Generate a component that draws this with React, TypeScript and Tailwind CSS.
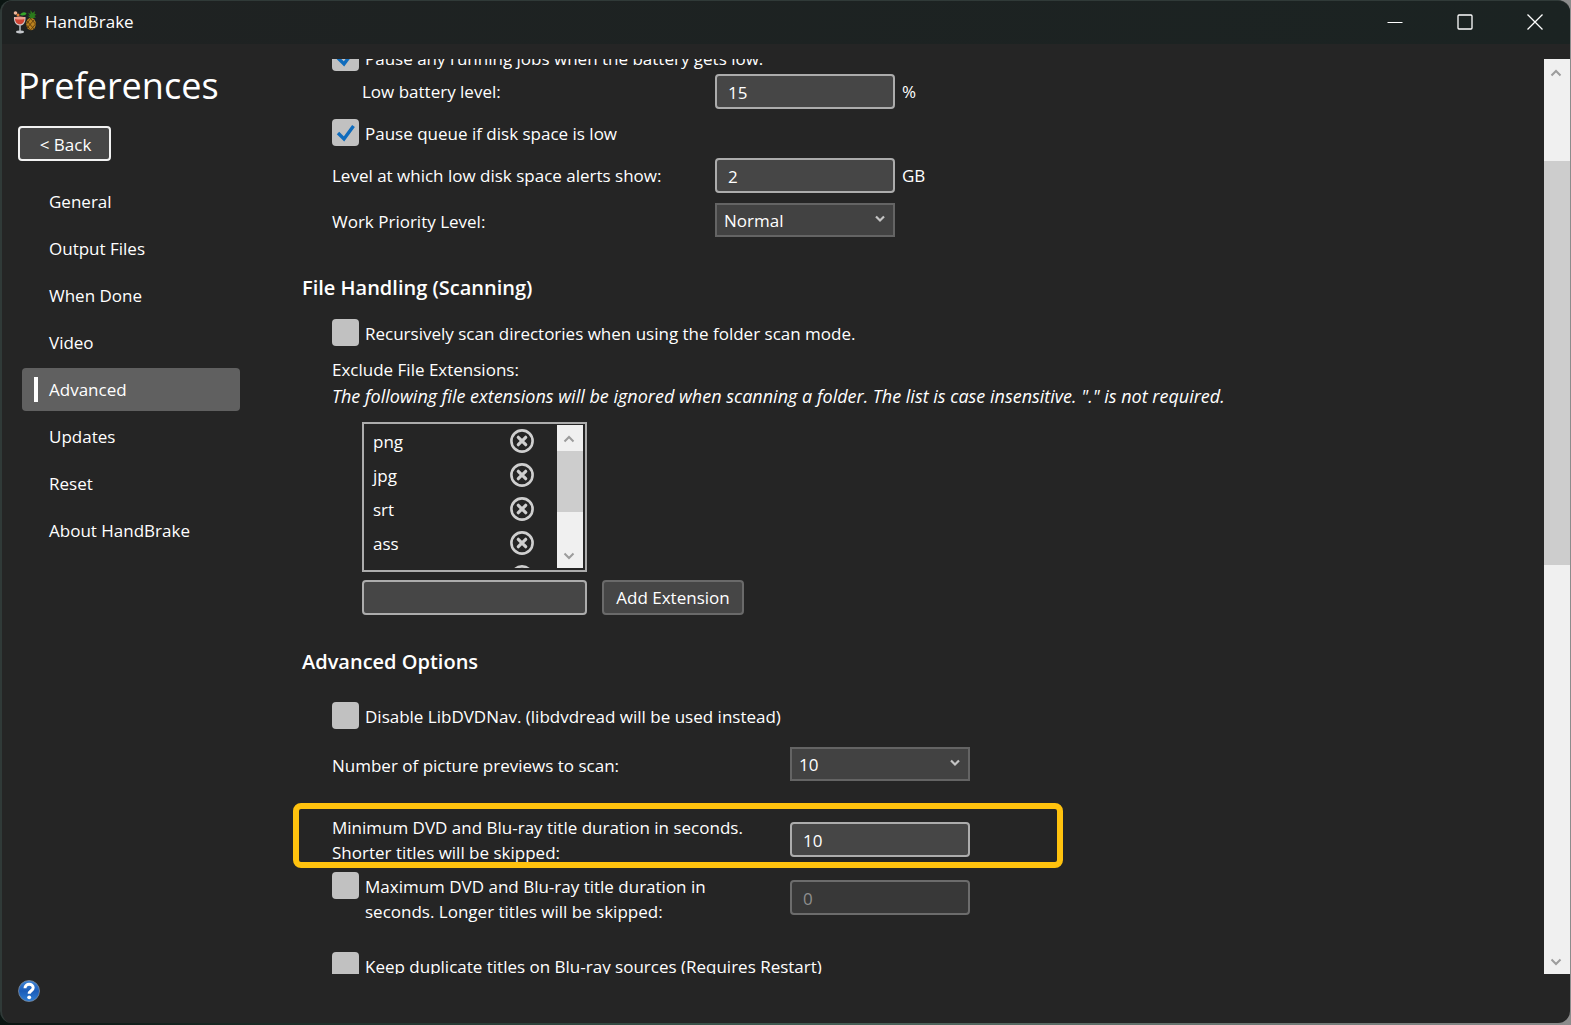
import { useId } from 'react';
import type { ReactNode } from 'react';
import clsx from 'clsx';

const NAV_ITEMS = ['General', 'Output Files', 'When Done', 'Video', 'Advanced', 'Updates', 'Reset', 'About HandBrake'];
const EXTENSIONS = ['png', 'jpg', 'srt', 'ass', 'txt'];

function AppIcon() {
  return (
    <svg width="24" height="24" viewBox="0 0 24 24" aria-hidden="true">
      <ellipse cx="18" cy="14" rx="4.800" ry="6.200" fill="#b9821f" />
      <path d="M14 11l7 8M13.500 15l4 5M17 8l5.500 6M21 10l-7 8M22.500 14l-5 6M18 8l-4.500 6" stroke="#5f3c0c" strokeWidth="0.900" />
      <path d="M18 8.500l-3.500-3 2.500.5-2-3.500 2.500 1.500L17.500 0l2 3L22 1l-.5 3 2 .5-2 1.500 1.500 1.500z" fill="#2b7a1c" />
      <path d="M7 5c1.500-3 5-3.500 6.500-1.500C13 5.500 9.500 6 7 5z" fill="#35a52a" />
      <circle cx="2.500" cy="3" r="1.800" fill="#f0b79c" />
      <circle cx="5" cy="5" r="1.500" fill="#e0803a" />
      <path d="M1 7h11.500c.5 5-2 8-4.500 8.500H6C3 15 .5 12 1 7z" fill="#cfc6c8" />
      <path d="M2 9h9.500c0 3-2 5-4 5.300H6C4 14 2 12 2 9z" fill="#cf4434" />
      <ellipse cx="6.800" cy="8" rx="5.200" ry="1.500" fill="#ee9d8c" />
      <path d="M6.200 15h1.600v6H6.200z" fill="#b0b3b8" />
      <ellipse cx="7" cy="22" rx="4" ry="1.400" fill="#c4c7cb" />
    </svg>
  );
}

function HelpIcon() {
  return (
    <svg width="22" height="24" viewBox="0 0 22 24" aria-hidden="true">
      <defs>
        <linearGradient id="help-fill" x1="0" y1="0" x2="0" y2="1">
          <stop offset="0" stopColor="#3f86d8" />
          <stop offset="0.500" stopColor="#1b5cb8" />
          <stop offset="1" stopColor="#2f7fd6" />
        </linearGradient>
      </defs>
      <circle cx="11" cy="12" r="10.500" fill="url(#help-fill)" stroke="#7f8c9c" strokeWidth="0.800" />
      <path d="M7 9.200c0-5.200 8.200-5.200 8.200-.4 0 3-4 3-4 6" fill="none" stroke="#fff" strokeWidth="3" />
      <circle cx="11.200" cy="18.300" r="1.900" fill="#fff" />
    </svg>
  );
}

function Chevron({ up = false }: { up?: boolean }) {
  return (
    <svg width="12" height="8" viewBox="0 0 12 8" aria-hidden="true">
      <path d={up ? 'M1.500 6.500L6 2l4.500 4.500' : 'M1.500 1.500L6 6l4.500-4.500'} fill="none" stroke="currentColor" strokeWidth="2" />
    </svg>
  );
}

function Scrollbar({ before, thumb, after }: { before: string; thumb: string; after: string }) {
  return (
    <div className="flex w-[26px] shrink-0 flex-col bg-[#f0f0f0] text-[#9c9c9c]">
      <button type="button" aria-label="Scroll up" className="flex h-[26px] items-center justify-center pt-0.5 pr-0.5">
        <Chevron up />
      </button>
      <div className="flex min-h-0 flex-1 flex-col">
        <div className={before} />
        <div className={clsx('bg-[#cdcdcd]', thumb)} />
        <div className={after} />
      </div>
      <button type="button" aria-label="Scroll down" className="flex h-[26px] items-center justify-center pt-0.5 pr-0.5">
        <Chevron />
      </button>
    </div>
  );
}

function CheckRow({ label, checked = false, className }: { label: ReactNode; checked?: boolean; className?: string }) {
  return (
    <label className={clsx('flex items-start gap-1.5', className)}>
      <span className="grid size-[27px] shrink-0">
        <input
          type="checkbox"
          defaultChecked={checked}
          className="peer col-start-1 row-start-1 size-full appearance-none rounded bg-[#c1c1c1]"
        />
        <svg
          viewBox="0 0 27 27"
          className="pointer-events-none invisible col-start-1 row-start-1 size-full peer-checked:visible"
          aria-hidden="true"
        >
          <path d="M6 14l6 6L21.500 7" fill="none" stroke="#0f6cbd" strokeWidth="3.400" />
        </svg>
      </span>
      <span className="pt-0.5 leading-[25px]">{label}</span>
    </label>
  );
}

function TextInput({
  id,
  value,
  disabled = false,
  className,
}: {
  id: string;
  value: string;
  disabled?: boolean;
  className?: string;
}) {
  return (
    <input
      id={id}
      type="text"
      defaultValue={value}
      disabled={disabled}
      className={clsx(
        'h-[35px] w-[180px] rounded border-2 border-[#acacac] bg-[#464646] px-[11px] pt-px disabled:border-[#6c6c6c] disabled:bg-[#383838] disabled:text-[#8e8e8e]',
        className
      )}
    />
  );
}

function SelectInput({ id, options }: { id: string; options: string[] }) {
  return (
    <span className="grid h-[34px] w-[180px]">
      <select
        id={id}
        className="col-start-1 row-start-1 appearance-none border-2 border-[#646464] bg-[#424242] pt-px pl-[7px]"
      >
        {options.map((o) => (
          <option key={o}>{o}</option>
        ))}
      </select>
      <svg
        width="10"
        height="8"
        viewBox="0 0 10 8"
        className="pointer-events-none col-start-1 row-start-1 mr-2.5 mb-0.5 self-center justify-self-end"
        aria-hidden="true"
      >
        <path d="M1 1.500l4 4 4-4" fill="none" stroke="#c4c4c4" strokeWidth="2.200" />
      </svg>
    </span>
  );
}

function Field({
  label,
  unit,
  indent = false,
  value,
  options,
  className,
}: {
  label: string;
  unit?: string;
  indent?: boolean;
  value?: string;
  options?: string[];
  className?: string;
}) {
  const id = useId();
  return (
    <div className={clsx('flex items-center', className)}>
      <label htmlFor={id} className={clsx('w-[383px]', indent && 'pl-[30px]', options && 'pt-1')}>
        {label}
      </label>
      {options ? <SelectInput id={id} options={options} /> : <TextInput id={id} value={value ?? ''} />}
      {unit && <span className="pl-[7px]">{unit}</span>}
    </div>
  );
}

function TitleBar() {
  return (
    <header className="flex h-[43px] shrink-0 items-center bg-linear-to-r from-[#1f2222] to-[#1b2322] pb-0.5">
      <div className="flex flex-1 items-center gap-2 pl-[11px]">
        <AppIcon />
        <span>HandBrake</span>
      </div>
      <button type="button" aria-label="Minimize" className="flex h-full w-[70px] items-center justify-center">
        <svg width="16" height="16" viewBox="0 0 16 16">
          <path d="M.5 8.500h15" stroke="#fff" />
        </svg>
      </button>
      <button type="button" aria-label="Maximize" className="flex h-full w-[70px] items-center justify-center">
        <svg width="16" height="16" viewBox="0 0 16 16">
          <rect x="1" y="1" width="14" height="14" rx="1" fill="none" stroke="#fff" strokeWidth="1.300" />
        </svg>
      </button>
      <button type="button" aria-label="Close" className="flex h-full w-[70px] items-center justify-center">
        <svg width="16" height="16" viewBox="0 0 16 16">
          <path d="M.5.5l15 15M15.500.5l-15 15" stroke="#fff" strokeWidth="1.300" />
        </svg>
      </button>
    </header>
  );
}

function Sidebar() {
  return (
    <aside className="flex w-[278px] shrink-0 flex-col items-start pl-4">
      <h1 className="mt-4 text-[36px] leading-[52px]">Preferences</h1>
      <button
        type="button"
        className="mt-3.5 h-[35px] w-[93px] rounded border-2 border-[#f2f2f2] bg-[#464646] pt-0.5 pl-0.5"
      >
        &lt; Back
      </button>
      <nav className="mt-[19px] ml-1 flex w-[218px] flex-col gap-1">
        {NAV_ITEMS.map((item) => (
          <a
            key={item}
            href="#"
            className={clsx('flex h-[43px] items-center rounded pl-3', item === 'Advanced' && 'bg-[#606060]')}
          >
            <span className={clsx('mr-[11px] h-[25px] w-1', item === 'Advanced' && 'bg-white')} />
            <span>{item}</span>
          </a>
        ))}
      </nav>
      <button type="button" aria-label="Help" className="mt-auto mb-5">
        <HelpIcon />
      </button>
    </aside>
  );
}

function ExtensionList() {
  return (
    <div className="ml-[30px]">
      <div className="mt-[13px] flex h-[150px] w-[225px] border-2 border-[#acacac] p-0.5 pt-px pl-px">
        <ul className="flex-1 overflow-hidden">
          {EXTENSIONS.map((ext) => (
            <li key={ext} className="flex h-[34px] items-center justify-between pr-[23px] pb-0.5 pl-2">
              <span className="pt-0.5">{ext}</span>
              <button type="button" aria-label={`Remove ${ext}`}>
                <svg width="24" height="24" viewBox="0 0 24 24" className="text-[#cfcfcf]">
                  <circle cx="12" cy="12" r="10.600" fill="none" stroke="currentColor" strokeWidth="2.600" />
                  <path d="M8.300 8.300l7.400 7.400M15.700 8.300l-7.400 7.400" stroke="currentColor" strokeWidth="3.200" strokeLinecap="round" />
                </svg>
              </button>
            </li>
          ))}
        </ul>
        <Scrollbar before="hidden" thumb="flex-[61]" after="flex-[30]" />
      </div>
      <div className="mt-2 flex gap-[15px]">
        <input
          type="text"
          aria-label="New extension"
          className="h-[35px] w-[225px] rounded border-2 border-[#acacac] bg-[#464646] px-[11px]"
        />
        <button
          type="button"
          className="h-[35px] w-[142px] rounded border-2 border-[#6a6a6a] bg-[#464646]"
        >
          Add Extension
        </button>
      </div>
    </div>
  );
}

function AdvancedOptions() {
  return (
    <section>
      <h2 className="mt-[33px] mb-[26px] text-[20px] leading-7 font-semibold">Advanced Options</h2>
      <div className="ml-[30px]">
        <CheckRow label="Disable LibDVDNav. (libdvdread will be used instead)" />
        <div className="mt-[18px] flex items-center">
          <label htmlFor="previews" className="w-[458px] pt-1">
            Number of picture previews to scan:
          </label>
          <SelectInput id="previews" options={['10', '20', '30']} />
        </div>
        <div className="relative mt-[34px] flex items-start">
          <label htmlFor="min-duration" className="w-[458px] leading-[25px]">
            Minimum DVD and Blu-ray title duration in seconds.
            <br />
            Shorter titles will be skipped:
          </label>
          <TextInput id="min-duration" value="10" className="mt-[7px]" />
          <div className="pointer-events-none absolute -top-3 -bottom-[3px] -left-[39px] w-[770px] rounded-lg border-6 border-[#ffc20e]" />
        </div>
        <div className="mt-[7px] flex items-start">
          <CheckRow
            className="w-[458px]"
            label={
              <>
                Maximum DVD and Blu-ray title duration in
                <br />
                seconds. Longer titles will be skipped:
              </>
            }
          />
          <TextInput id="max-duration" value="0" disabled className="mt-2" />
        </div>
        <CheckRow className="mt-7" label="Keep duplicate titles on Blu-ray sources (Requires Restart)" />
      </div>
    </section>
  );
}

export default function App() {
  return (
    <div className="h-screen bg-linear-to-r from-[#0b1512] via-[#3f5a50] to-[#8c8c8c] pr-px pb-0.5 font-['Open_Sans','Noto_Sans',sans-serif] text-[17px] leading-[26px] text-white">
      <div className="flex h-full flex-col overflow-hidden rounded-xl border-t border-l-2 border-[#303a38] bg-[#252525]">
        <TitleBar />
        <div className="flex min-h-0 flex-1">
          <Sidebar />
          <main className="mt-[15px] mb-[49px] flex min-w-0 flex-1 overflow-hidden">
            <div className="-mt-[15px] min-w-0 flex-1 pl-[22px]">
              <section className="ml-[30px]">
                <CheckRow checked label="Pause any running jobs when the battery gets low." />
                <Field className="mt-[3px]" label="Low battery level:" value="15" unit="%" indent />
                <CheckRow className="mt-2.5" checked label="Pause queue if disk space is low" />
                <Field className="mt-3" label="Level at which low disk space alerts show:" value="2" unit="GB" />
                <Field
                  className="mt-2.5"
                  label="Work Priority Level:"
                  options={['Normal', 'Below Normal', 'Low']}
                />
              </section>
              <section>
                <h2 className="mt-[37px] mb-[17px] text-[20px] leading-7 font-semibold">File Handling (Scanning)</h2>
                <div className="ml-[30px]">
                  <CheckRow label="Recursively scan directories when using the folder scan mode." />
                  <p className="mt-[11px]">Exclude File Extensions:</p>
                  <p className="text-[18px] italic">
                    The following file extensions will be ignored when scanning a folder. The list is case insensitive.
                    "." is not required.
                  </p>
                  <ExtensionList />
                </div>
              </section>
              <AdvancedOptions />
            </div>
            <Scrollbar before="flex-[76]" thumb="flex-[404]" after="flex-[383]" />
          </main>
        </div>
      </div>
    </div>
  );
}
